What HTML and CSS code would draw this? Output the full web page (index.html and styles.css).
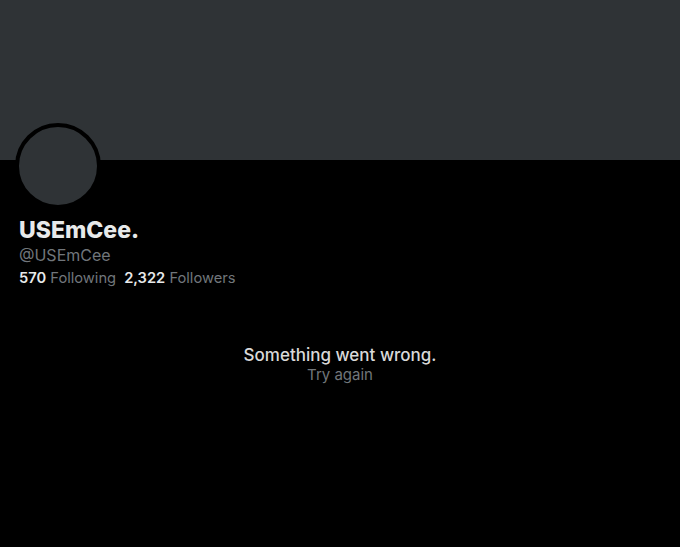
FILE: index.html
```html
<!DOCTYPE html>
<html>
<head>
<meta charset="utf-8">
<link rel="stylesheet" href="styles.css">
</head>
<body>
<div class="page">
  <div class="banner"></div>
  <div class="profile">
    <div class="avatar"></div>
    <div class="name">USEmCee.</div>
    <div class="handle">@USEmCee</div>
    <div class="stats">
      <span class="stat"><b>570</b> Following</span>
      <span class="stat"><b>2,322</b> Followers</span>
    </div>
  </div>
  <div class="error">
    <div class="error-title">Something went wrong.</div>
    <div class="error-retry">Try again</div>
  </div>
</div>
</body>
</html>
```
FILE: styles.css
```css
html, body {
  margin: 0;
  padding: 0;
  background: #000;
}
body {
  font-family: Inter, "Liberation Sans", Arial, sans-serif;
  width: 680px;
  height: 547px;
  overflow: hidden;
}
.page {
  display: flex;
  flex-direction: column;
}
.banner {
  height: 160px;
  background: #2f3336;
}
.profile {
  padding: 0 0 0 19px;
  display: flex;
  flex-direction: column;
}
.avatar {
  width: 78px;
  height: 78px;
  border-radius: 50%;
  background: #2f3336;
  border: 4px solid #000;
  margin: -37px 0 0 -4px;
}
.name {
  margin-top: 8px;
  font-size: 23px;
  font-weight: 800;
  color: #e7e9ea;
  line-height: 26px;
}
.handle {
  margin-top: 1px;
  font-size: 16px;
  color: #71767b;
  line-height: 22px;
}
.stats {
  display: flex;
  gap: 8px;
  margin-top: 1px;
  font-size: 14.7px;
  line-height: 22px;
  color: #71767b;
}
.stat b {
  color: #e7e9ea;
  font-weight: 600;
}
.error {
  margin-top: 55px;
  display: flex;
  flex-direction: column;
  align-items: center;
}
.error-title {
  font-size: 17px;
  font-weight: 500;
  color: #d9d9d9;
  line-height: 22px;
}
.error-retry {
  font-size: 15px;
  color: #71767b;
  line-height: 18px;
}
```
